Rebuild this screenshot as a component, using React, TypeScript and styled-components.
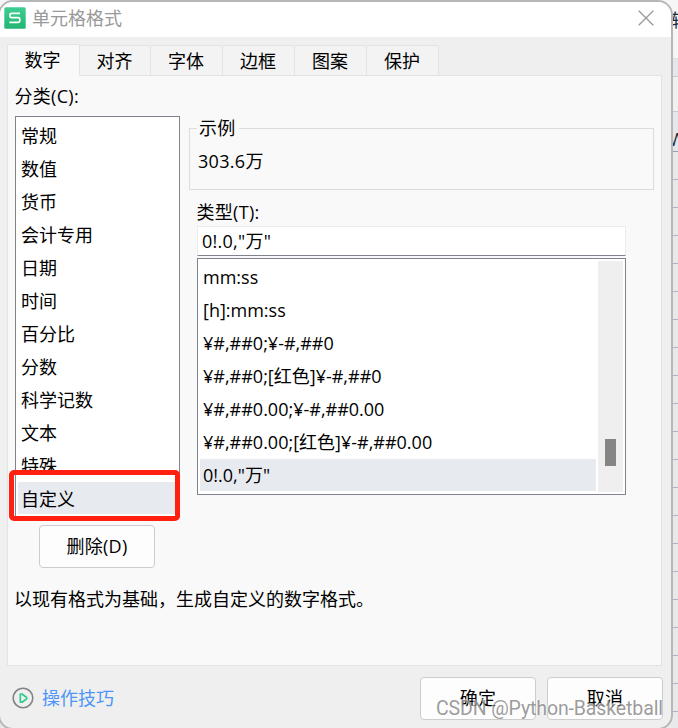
import React from "react";
import styled, { createGlobalStyle } from "styled-components";

const Global = createGlobalStyle`
  * { box-sizing: border-box; }
  body {
    margin: 0;
    overflow: hidden;
    font-family: "Open Sans", "Noto Sans CJK SC", sans-serif;
    font-size: 18px;
    font-weight: 400;
    color: #000;
  }
`;

const Screen = styled.div`
  display: grid;
  width: 678px;
  height: 728px;
  overflow: hidden;
`;

const Sheet = styled.div`
  grid-area: 1 / 1;
  justify-self: end;
  display: flex;
  flex-direction: column;
  width: 678px;
  height: 728px;
  background: #e9e9eb;
`;

const SheetRow = styled.div<{ $h: number; $bg: string; $line: string }>`
  flex: none;
  height: ${(p) => p.$h}px;
  background: ${(p) => p.$bg};
  border-bottom: 1px solid ${(p) => p.$line};
  display: flex;
  justify-content: flex-end;
  overflow: hidden;
`;

const SheetText = styled.span<{ $w: number; $top: number }>`
  width: ${(p) => p.$w}px;
  padding-top: ${(p) => p.$top}px;
  line-height: 20px;
  font-size: 18px;
  color: #1c2a3c;
  white-space: nowrap;
`;

const Dialog = styled.main`
  grid-area: 1 / 1;
  z-index: 1;
  display: flex;
  flex-direction: column;
  width: 675px;
  height: 730px;
  margin-left: -2px;
  border: 2px solid #b7b7b7;
  border-radius: 15px;
  background: #efefef;
  overflow: hidden;
`;

const TitleBar = styled.header`
  display: flex;
  align-items: center;
  flex: none;
  height: 35px;
  padding: 0 17px 3px 4px;
  background: #fff;
`;

const Title = styled.span`
  flex: 1;
  padding-left: 6px;
  line-height: 26px;
  color: #999;
`;

const Tabs = styled.nav`
  display: flex;
  align-items: flex-end;
  flex: none;
  height: 39px;
  padding-left: 7px;
  margin-bottom: -1px;
  z-index: 1;
`;

const Tab = styled.div<{ $active?: boolean }>`
  width: ${(p) => (p.$active ? 73 : 72)}px;
  height: ${(p) => (p.$active ? 32 : 31)}px;
  padding-right: 1px;
  border: 1px solid #e3e3e3;
  border-left-width: ${(p) => (p.$active ? 1 : 0)}px;
  border-bottom-color: ${(p) => (p.$active ? "#f9f9f9" : "#e3e3e3")};
  border-radius: 2px 2px 0 0;
  background: ${(p) => (p.$active ? "#f9f9f9" : "#f3f3f3")};
  text-align: center;
  line-height: 31px;

  &:first-child { padding-right: 2px; }
  &:nth-child(2) { width: 71px; }
`;

const Panel = styled.section`
  flex: none;
  display: grid;
  grid-template-columns: 165px 465px;
  grid-template-rows: 442px 50px 1fr;
  column-gap: 9px;
  width: 655px;
  height: 591px;
  margin-left: 7px;
  padding-left: 7px;
  border: 1px solid #e3e3e3;
  background: #f9f9f9;
`;

const Column = styled.div<{ $top: number }>`
  display: flex;
  flex-direction: column;
  padding-top: ${(p) => p.$top}px;
`;

const Label = styled.label<{ $h: number }>`
  height: ${(p) => p.$h}px;
  line-height: 24px;
  letter-spacing: 0.3px;
  text-indent: -0.5px;
`;

const List = styled.div<{ $h: number }>`
  display: flex;
  flex: none;
  height: ${(p) => p.$h}px;
  padding: 2px;
  border: 1px solid #83838f;
  background: #fff;
`;

const Options = styled.div`
  flex: 1;
  display: flex;
  flex-direction: column;
  gap: 1px;
`;

const Option = styled.div<{ $selected?: boolean; $line: number }>`
  flex: none;
  height: 32px;
  line-height: ${(p) => p.$line}px;
  padding-left: 3px;
  white-space: nowrap;
  background: ${(p) => (p.$selected ? "#e7eaef" : "transparent")};
`;

const HighlightFrame = styled.div`
  position: absolute;
  left: 9px;
  top: 470px;
  width: 171px;
  height: 51px;
  z-index: 2;
  border: 5px solid #ff2010;
  border-radius: 5px;
`;

const Example = styled.fieldset`
  margin: 0;
  height: 74px;
  min-width: 0;
  padding: 0 0 0 8px;
  border: 1px solid #dcdcdc;
`;

const Legend = styled.legend`
  padding: 0 3px 0 2px;
  margin-left: -1px;
  line-height: 24px;
  letter-spacing: 0.3px;
`;

const ExampleValue = styled.div`
  padding: 9px 0 0 0;
  line-height: 24px;
  letter-spacing: 0.3px;
`;

const TypeArea = styled.div`
  display: flex;
  flex-direction: column;
  width: 429px;
  margin: 10px 0 0 8px;
`;

const TypeInput = styled.div`
  height: 30px;
  margin-bottom: 2px;
  padding-left: 4px;
  line-height: 29px;
  letter-spacing: 0.25px;
  background: #fff;
  border: 1px solid #ececec;
  border-bottom-color: #83838f;
  border-radius: 1px;
`;

const Track = styled.div`
  width: 25px;
  margin-left: 2px;
  padding: 178px 0 0 7px;
  background: #efefef;
`;

const Thumb = styled.div`
  width: 11px;
  height: 27px;
  background: #858585;
`;

const Button = styled.button`
  width: 116px;
  height: 43px;
  padding: 0;
  font: inherit;
  line-height: 41px;
  letter-spacing: 0.3px;
  color: #000;
  background: #fdfdfd;
  border: 1px solid #cdcdcd;
  border-radius: 4px;
`;

const DeleteCell = styled.div`
  padding: 7px 0 0 24px;
`;

const Description = styled.p`
  grid-column: 1 / -1;
  margin: 0;
  padding-top: 19px;
  line-height: 24px;
  text-indent: -1px;
`;

const Footer = styled.footer`
  display: flex;
  align-items: flex-start;
  flex: none;
  height: 65px;
  padding: 11px 8px 0 12px;
`;

const TipLink = styled.span`
  flex: 1;
  display: flex;
  align-items: center;
  gap: 8px;
  height: 42px;
  line-height: 24px;
  color: #4d95f7;
`;

const Actions = styled.div`
  display: flex;
  gap: 11px;
`;

const Watermark = styled.span`
  position: absolute;
  left: 436px;
  top: 697px;
  z-index: 3;
  font-family: Roboto, "Liberation Sans", sans-serif;
  font-size: 19.5px;
  font-weight: 400;
  letter-spacing: -0.12px;
  line-height: 24px;
  white-space: nowrap;
  color: rgba(130, 130, 130, 0.8);
  text-shadow: -1px -1px 0 rgba(255, 255, 255, 0.6);
`;

const categories = [
  "常规", "数值", "货币", "会计专用", "日期", "时间",
  "百分比", "分数", "科学记数", "文本", "特殊", "自定义",
];

const formats = [
  "mm:ss",
  "[h]:mm:ss",
  "¥#,##0;¥-#,##0",
  "¥#,##0;[红色]¥-#,##0",
  "¥#,##0.00;¥-#,##0.00",
  "¥#,##0.00;[红色]¥-#,##0.00",
  '0!.0,"万"',
];

const tabs = ["数字", "对齐", "字体", "边框", "图案", "保护"];

const AppLogo = () => (
  <svg width="22" height="22" viewBox="0 0 22 22">
    <defs>
      <linearGradient id="logo" x1="0" y1="0" x2="0" y2="1">
        <stop offset="0" stopColor="#3fce91" />
        <stop offset="1" stopColor="#22b573" />
      </linearGradient>
    </defs>
    <rect x="0.3" y="0.3" width="21.4" height="21.4" rx="1.5" fill="url(#logo)" />
    <path
      d="M16 6.3H7.6Q6 6.3 6 7.8V9.2Q6 10.7 7.6 10.7H14.2Q15.8 10.7 15.8 12.2V13.8Q15.8 15.3 14.2 15.3H5.4"
      fill="none"
      stroke="#fff"
      strokeWidth="1.7"
    />
  </svg>
);

const CloseIcon = () => (
  <svg width="16" height="16" viewBox="0 0 16 16">
    <path d="M0.7 0.7L15.3 15.3M15.3 0.7L0.7 15.3" stroke="#999" strokeWidth="1.3" />
  </svg>
);

const PlayIcon = () => (
  <svg width="22" height="22" viewBox="0 0 22 22" fill="none">
    <circle cx="11" cy="11" r="9.8" stroke="#858585" strokeWidth="1.6" />
    <path d="M8.3 7V15.2L10 15.2L14.7 11.7V10.5L10 7Z" stroke="#35ca8c" strokeWidth="1.7" strokeLinejoin="round" />
  </svg>
);

export default function App() {
  return (
    <Screen>
      <Global />
      <Sheet>
        <SheetRow $h={59} $bg="#f6f6f6" $line="#dedee0">
          <SheetText $w={7} $top={10}>转</SheetText>
        </SheetRow>
        <SheetRow $h={18} $bg="#e6e7eb" $line="#c8cad2" />
        <SheetRow $h={35} $bg="#f0f0f1" $line="#c8cad2" />
        <SheetRow $h={40} $bg="#e6e7eb" $line="#989eab">
          <SheetText $w={9} $top={17}>W</SheetText>
        </SheetRow>
        {Array.from({ length: 20 }, (_, i) => (
          <SheetRow key={i} $h={28} $bg="#e9e9ea" $line="#b3b4c2" />
        ))}
      </Sheet>
      <Dialog>
        <TitleBar>
          <AppLogo />
          <Title>单元格格式</Title>
          <CloseIcon />
        </TitleBar>
        <Tabs>
          {tabs.map((t, i) => (
            <Tab key={t} $active={i === 0}>{t}</Tab>
          ))}
        </Tabs>
        <Panel>
          <Column $top={8}>
            <Label $h={32}>分类(C):</Label>
            <List $h={401}>
              <Options>
                {categories.map((c) => (
                  <Option key={c} $line={34} $selected={c === "自定义"}>{c}</Option>
                ))}
              </Options>
            </List>
          </Column>
          <Column $top={40}>
            <Example>
              <Legend>示例</Legend>
              <ExampleValue>303.6万</ExampleValue>
            </Example>
            <TypeArea>
              <Label $h={26}>类型(T):</Label>
              <TypeInput>0!.0,"万"</TypeInput>
              <List $h={237}>
                <Options>
                  {formats.map((f, i) => (
                    <Option key={f} $line={32} $selected={i === formats.length - 1}>{f}</Option>
                  ))}
                </Options>
                <Track>
                  <Thumb />
                </Track>
              </List>
            </TypeArea>
          </Column>
          <DeleteCell>
            <Button>删除(D)</Button>
          </DeleteCell>
          <Description>以现有格式为基础，生成自定义的数字格式。</Description>
        </Panel>
        <Footer>
          <TipLink>
            <PlayIcon />
            操作技巧
          </TipLink>
          <Actions>
            <Button>确定</Button>
            <Button>取消</Button>
          </Actions>
        </Footer>
      </Dialog>
      <HighlightFrame />
      <Watermark>CSDN @Python-Basketball</Watermark>
    </Screen>
  );
}
